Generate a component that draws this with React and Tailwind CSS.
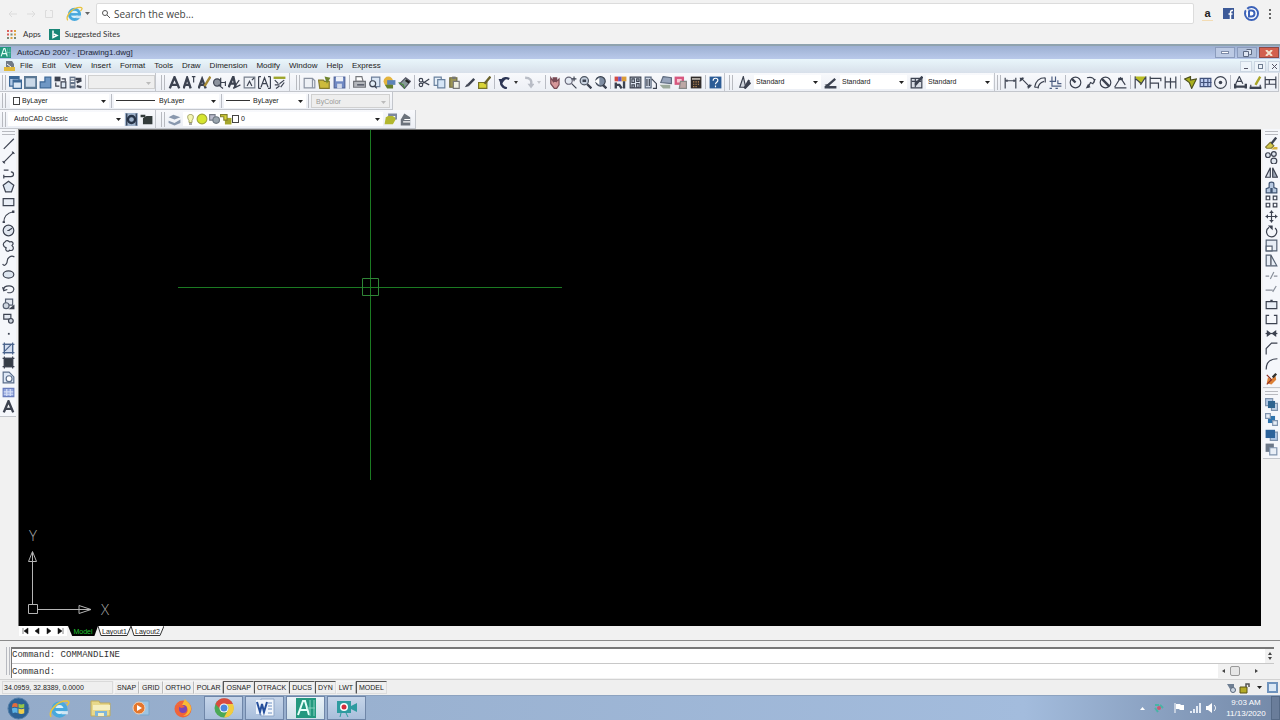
import React from 'react';

const K = '#3c4250';
const B = '#3b6796';
const L = '#b4cbe8';
const Y = '#d9d437';

const Lines = ({ d, c = K, w = 1 }) => <path d={d} stroke={c} strokeWidth={w} fill="none" />;

// 12x12 toolbar drawings
const icons = {
  // viewports
  vpDialog: <><path d="M1 1h8v8H1z" fill={L} stroke={B} /><path d="M4 4h7v7H4z" fill="#dbe7f5" stroke={B} /><path d="M4 5h7M1 2h8" stroke={B} strokeWidth="2" /></>,
  vpSingle: <><path d="M1 1.500h10v9H1z" fill="#c9d8e8" stroke="#5b7894" strokeWidth="2" /></>,
  vpPoly: <path d="M1.500 10.500v-5h4v-4h5v9z" fill="#6f97c4" stroke={B} />,
  vpObject: <><path d="M1 1h5v4H1z" fill={K} /><path d="M6.500 5.500h4v5h-4z" fill="#dce6f2" stroke={K} /><Lines d="M2 6v3h3M7 3h3v2" /></>,
  vpClip: <><path d="M1 1h5v10H1z" fill="#66758a" /><path d="M2 3h3M2 5h3M2 8h3" stroke="#fff" /><Lines d="M6 3h5M7 6l4-2M7 9l4 1" w={2} /></>,
  // text
  textA: <Lines d="M2 11L6 1.500 10 11M3.500 8h5" w={2} />,
  textI: <><Lines d="M1 11L4 2l3 9M2 8h4" w={2} /><Lines d="M8 1h3M9.500 1v5" /></>,
  textEdit: <><Lines d="M1 11L4 3l3 8M2 8h4" w={2} /><Lines d="M11 1L6 9" c="#a68a36" w={2} /></>,
  textFind: <><circle cx="4" cy="6" r="3" fill="#8d939e" stroke={K} /><Lines d="M7 2v7M11 5v4M7 6h4M5 8l4 3" /></>,
  textStyle: <><Lines d="M1 10L5 1l2 9M2 7h4" w={2} /><Lines d="M10 4L5 11l6-3" /></>,
  textScale: <><path d="M1.500 1.500h9v9h-9z" fill="#eef1f6" stroke="#777f8c" /><Lines d="M4 9l2-4 2 4M8 4l2-2" /></>,
  textJust: <><Lines d="M1 1v10M11 1v10M1 1h2M9 1h2M1 11h2M9 11h2M3 10l3-8 3 8M4 7h4" /></>,
  textSpace: <><path d="M1 1h10v2H1z" fill="#9da52b" /><Lines d="M2 4l3 3M10 4L6 7M2 8h4M7 10l3-4M3 11l3-2" /></>,
  // standard
  newDoc: <><path d="M1.500 2.500h7l2 2v6h-9z" fill="#edf0f5" stroke="#8b93a2" /><path d="M8.500 2.500v8" stroke="#8b93a2" /></>,
  open: <><path d="M1 4h4l1 1h4v6H2z" fill="#cdbb3c" stroke="#857a2d" /><path d="M6 1l5 1-3 5" fill="#70852f" /></>,
  save: <><path d="M1.500 1.500h9v9h-9z" fill="#7089c4" stroke="#53669b" /><path d="M3 1h6v4H3z" fill="#eef1f8" /><path d="M4 7h4v4H4z" fill="#d3daea" /></>,
  print: <><path d="M3 1h5l1 4H3z" fill="#fff" stroke="#75777c" /><path d="M1 5h10v5H1z" fill="#b3b6bc" stroke="#73767c" /><path d="M4 8h6" stroke={K} /></>,
  preview: <><path d="M3.500 1.500h7v8h-7z" fill="#dbe7f5" stroke="#6d7f9a" /><circle cx="4.500" cy="7" r="2.500" fill="#e4eef8" stroke={K} /><Lines d="M6 9l2 2" /></>,
  publish: <><circle cx="5" cy="5" r="4" fill="#e3b43e" /><path d="M4 4h7v4H4z" fill="#5d84b8" /><path d="M2 8h7v3H4z" fill="#66802a" /></>,
  dwf: <><path d="M2 7l5-5 4 3-5 6z" fill="#899" stroke="#556" /><path d="M1 6l4 2 1 3" stroke="#488a3b" fill="none" /><path d="M7 4l3 2" stroke="#222" strokeWidth="2" /></>,
  cut: <><Lines d="M10 3L4 7M10 8L4 5" w={1} /><circle cx="3" cy="4" r="1.500" stroke={K} fill="none" /><circle cx="3" cy="8" r="1.500" stroke={K} fill="none" /></>,
  copy: <><path d="M1.500 1.500h6v7h-6z" fill="#e6eff9" stroke="#68809d" /><path d="M4.500 3.500h6v7h-6z" fill="#d5e5f7" stroke="#68809d" /></>,
  paste: <><path d="M2 2h6v8H2z" fill="#9c9553" stroke="#6d693e" /><path d="M5 5h5v6H5z" fill="#f0f0e2" stroke="#777" /><path d="M4 1h3v2H4z" fill="#777" /></>,
  brush: <><Lines d="M10 3L5 8" w={2} /><path d="M2 10l2-3 2 2z" fill={K} /></>,
  blockEdit: <><path d="M1 6h7v5H1z" fill={Y} stroke="#787426" /><Lines d="M11 1L6 7" c="#6a622a" w={2} /></>,
  undo: <><path d="M8 11C4 10 2 7 4 4c1-2 4-2 6-1" fill="none" stroke="#2c3554" strokeWidth="2" /><path d="M1 3h6L3 8z" fill="#2c3554" /></>,
  redo: <><path d="M4 2c4 0 6 2 5 6" fill="none" stroke="#b9bdc6" strokeWidth="2" /><path d="M6 7h6l-3 4z" fill="#b9bdc6" /></>,
  pan: <><path d="M2 2l2 3V2h1v3h1V2h1v3l2-2v5l-2 3H5L2 7z" fill="#d6979a" stroke="#784a55" /></>,
  zoomRt: <><circle cx="4.500" cy="4.500" r="3" fill="#e4eaf3" stroke="#667" /><Lines d="M7 7l4 4M9 1v4M7 3h4" /></>,
  zoomWin: <><circle cx="5" cy="4.500" r="3.500" fill="#c5cfdd" stroke="#4d5562" /><Lines d="M7.500 7.500l3.500 3.500M3.500 4.500h3" w={2} /></>,
  zoomPrev: <><circle cx="6" cy="5" r="4" fill="#7e8ca1" stroke="#3b4350" /><path d="M1 5l4-3v6z" fill="#fff" /><Lines d="M8 8l3 3" w={2} /></>,
  props: <><path d="M1 1h3v4H1z" fill="#d44b42" /><path d="M4 1h3v4H4z" fill="#6a53bd" /><path d="M7 1h4v4H7z" fill="#db9c38" /><Lines d="M2 6v5M2 8h3l2 3M9 5v6" w={2} /></>,
  design: <><path d="M1.500 1.500h9v9h-9z" fill="#dce4ef" stroke={K} /><Lines d="M3 3h2v3H3zM7 3h2v2H7zM3 8h2v2H3zM7 7h2v3H7z" /></>,
  toolPal: <><path d="M1.500 1.500h5v9h-5z" fill="#d0d8e5" stroke="#59677d" /><Lines d="M3 3v6M5 3v6M7 3l4 4v4H8" /></>,
  sheetSet: <><path d="M4 1l7 1v5L2 6z" fill="#97a4bb" stroke="#5f6c80" /><path d="M1 8h9v3H4z" fill="#9caa9c" /></>,
  markup: <><path d="M1 1h8v7H1z" fill="#d7577f" /><path d="M3 3h4v3H3z" fill="#f8c6d4" /><path d="M6 5h5v6H5z" fill="#bda8a6" stroke="#888" /></>,
  calc: <><path d="M2 1h9v10H2z" fill="#302b2a" /><path d="M3 3h7" stroke="#f7efe4" /><path d="M4 5.500h1M6 5.500h1M8 5.500h1M4 7.500h1M6 7.500h1M8 7.500h1M4 9.500h1M6 9.500h1" stroke="#c9955d" /></>,
  help: <><path d="M1 1h10v10H1z" fill="#2c5c96" /><path d="M4 4.500c0-3 4-2.500 4-.5C8 6 6 5.500 6 7.500M6 8.500v1.500" stroke="#fff" fill="none" /></>,
  // styles
  styText: <><path d="M2 10L5 1l2 9z" fill="#cfd4dc" stroke={K} /><Lines d="M10 4L6 11l5-5" w={2} /></>,
  styDim: <><Lines d="M1 10h10M2 10l8-7" w={2} /><path d="M1 8l4-1v4z" fill={K} /></>,
  styTable: <><path d="M1.500 2.500h9v8h-9z" fill="#d9dde4" stroke={K} /><Lines d="M2 5h8M5 3v7" /><Lines d="M11 1L5 8" w={2} /></>,
  // dimensions
  dimLin: <Lines d="M1.500 2v9M10.500 2v9M2 4.500h8M3 3.500v2M9 3.500v2" />,
  dimAli: <><Lines d="M3 3l6 6M1 5l3-3M8 11l3-3" /><path d="M1 2h4L2 5zM7 10h3V7z" fill={K} /></>,
  dimArc: <><Lines d="M1 10C2 4 6 2 10 2M4 11c0-3 2-5 5-6M1 10h3M10 2v4" /></>,
  dimOrd: <><Lines d="M3 1v8h8M1 5h5V1M8 4v3h3M1 11h2M6 11h2" c="#4c5d80" /></>,
  dimRad: <><circle cx="6" cy="6" r="4.500" stroke={K} fill="none" /><Lines d="M6 6L3 3" w={2} /></>,
  dimJog: <><Lines d="M3 2c5-1 7 1 6 4M4 10l2-4 2 1 2-4" /><path d="M2 11l2-4 2 3z" fill={K} /></>,
  dimDia: <><circle cx="6" cy="6" r="4.500" stroke={K} fill="none" /><Lines d="M3 3l6 6" w={2} /></>,
  dimAng: <><Lines d="M1 10.500h10M1 10L6 2l4 6" /><path d="M4 2h4v2H4z" fill={K} /></>,
  dimQuick: <><path d="M1 1h10L6 8z" fill="#b9bd23" /><Lines d="M1.500 1v10M10.500 1v10M2 3l5 4M6 8l4-6" /></>,
  dimBase: <Lines d="M1.500 1v10M2 2.500h9M2 6.500h6M8.500 6v5M10.500 2v3" />,
  dimCont: <Lines d="M1.500 1v10M6 2v9M10.500 1v10M2 5.500h8" />,
  leader: <><path d="M1 3l5-2v3l5-1-4 8-2-5z" fill="#aab01f" stroke="#4d501f" /></>,
  tolerance: <><path d="M1.500 2.500h9v7h-9z" fill="#bcccf0" stroke="#40507a" /><Lines d="M4.500 3v6M8 3v6M2 6h9" c="#40507a" /></>,
  center: <><circle cx="6" cy="6" r="5" stroke={K} fill="none" /><circle cx="6" cy="6" r="1.500" fill={K} /></>,
  dimEdit: <><Lines d="M2 7l3-6 3 6M3 5h4" w={1} /><Lines d="M1 9.500h10M1.500 7v4M10.500 7v4" w={2} /></>,
  dimTEdit: <><Lines d="M1 10.500h10" w={2} /><Lines d="M10 1L6 8" c="#aaa527" w={2} /><Lines d="M2 8v3M10 8v3" /></>,
  dimUpd: <Lines d="M1.500 1v10M10.500 1v10M2 3.500h8M2 7.500h8M5 3v5" w={1} />,
  // workspace + layers
  gear: <><path d="M0 0h12v12H0z" fill="#9fb2ca" /><circle cx="6" cy="6" r="3" fill="none" stroke="#263347" strokeWidth="2" /><Lines d="M2 1v10M10 1v10" c="#263347" /></>,
  home: <><path d="M1 2h4v2H1zM6 3h5v7H3V5z" fill="#333b3b" /></>,
  layers: <><path d="M1 4l4-2 6 2-5 2zM1 7l5 2 5-3v3l-5 2-5-2z" fill="#8998ae" /></>,
  bulb: <><path d="M6 1c4 0 3 4 1.500 6v2h-3V7C3 5 2 1 6 1z" fill="#f4f6b4" stroke="#a0a060" /><path d="M4.500 10.500h3" stroke="#555" /></>,
  sun: <><circle cx="6" cy="6" r="4.500" fill="#d5e52e" stroke="#a0a638" /></>,
  freeze: <><path d="M2 2h5v5H2z" fill="#bbc" stroke="#767c88" /><circle cx="8" cy="7" r="3" fill="#9aa5ae" stroke="#6c7681" /></>,
  lock: <><path d="M5 5h6v6H5z" fill="#a5a62d" /><path d="M1 2h6v5H4V4H1z" fill={Y} stroke="#81802e" /></>,
  layPrev: <><path d="M2 4l4-2 5 3-3 5H1z" fill="#b2b72f" /><path d="M4 2h7v4" fill="none" stroke="#7c879c" strokeWidth="2" /></>,
  layState: <><path d="M5 1l5 3v7H2V6z" fill="#6c737d" /><path d="M5 6h5M4 8h6" stroke="#fff" /></>,
  // draw
  line: <Lines d="M2 10.500L10.500 2" />,
  xline: <><Lines d="M1.500 10.500L10.500 1.500" /><path d="M1 9l2 2M9 1l2 2" stroke={K} /></>,
  pline: <Lines d="M2 4h4M2 9.500h6c3 0 3-4 0-4M2 8v3" />,
  polygon: <path d="M6 1.500l4.500 3.500-2 5.500h-5L1.500 5z" fill="#dfe8f3" stroke={K} />,
  rect: <path d="M1.500 3.500h9v6h-9z" fill="#e9eef6" stroke={K} strokeWidth="1" />,
  arc: <><Lines d="M2 11c0-5 3-8 8-9" /><path d="M1 10h2v2H1zM9 1h2v2H9z" fill={K} /></>,
  circle: <><circle cx="6" cy="6" r="4.500" stroke={K} fill="#e0e6ef" /><path d="M6 6l3-2M5 6h2" stroke={K} /></>,
  cloud: <path d="M3 3c1-2 3-1 4 0 2-1 4 1 2 3 2 2 1 5-2 4-2 2-4 0-3-2-3-1-3-4-1-5z" fill="#edf1f7" stroke={K} />,
  spline: <Lines d="M1 9c2 3 4-1 4-3s3-5 6-3" />,
  ellipse: <ellipse cx="6" cy="6" rx="4.500" ry="3" fill="#dde5ef" stroke={K} />,
  elArc: <><path d="M2 6c0-4 9-4 8.500 0C10 9 7 9 5 8.500M1 4l1 3 3-1" fill="none" stroke={K} /></>,
  insBlock: <><path d="M3.500 1.500h6v5h-6z" fill="#e4e9f2" stroke="#555f70" /><circle cx="4" cy="7" r="2.500" fill="#cfd6e0" stroke="#555f70" /><path d="M6 10h5V6z" fill={K} /></>,
  mkBlock: <><path d="M2 2.500h6v4H2z" fill="#e4e9f2" stroke={K} /><circle cx="8" cy="8" r="2" fill="#cfd6e0" stroke={K} /></>,
  point: <path d="M5.500 5.500h1.500v1.500H5.500z" fill={K} />,
  hatch: <><path d="M2.500 2.500h7v7h-7z" fill="#d4def0" stroke="#4b648c" /><Lines d="M1 2.500h10M1 9.500h10M2.500 1v10M9.500 1v10M3 8l5-5" c="#4b648c" /></>,
  gradient: <><path d="M2 2h8v8H2z" fill="#353c46" /><Lines d="M1 2.500h10M1 9.500h10M2.500 1v10M9.500 1v10" /></>,
  region: <><path d="M1.500 1.500h5l4 4v5h-9z" fill="#dfe8f6" stroke="#5a6d8a" /><circle cx="6.500" cy="7" r="2.500" fill="#fff" stroke="#5a6d8a" /></>,
  table: <><path d="M1.500 2.500h9v7h-9z" fill="#90a4dd" stroke="#6a7dbd" /><Lines d="M2 5.500h8M2 7.500h8M4.500 3v6M7.500 3v6" c="#d5def6" /></>,
  // modify
  erase: <><path d="M1 9l4-4 3 3-2 2H2z" fill="#d4c84c" stroke="#807830" /><Lines d="M6 6l4-5" w={2} /><path d="M8 9h3v2H6z" fill="#d7b33f" /></>,
  copyObj: <><circle cx="3" cy="4" r="2" stroke={K} fill="#dfe6ef" /><circle cx="8" cy="3" r="2" stroke={K} fill="#dfe6ef" /><circle cx="8" cy="9" r="2.500" stroke={K} fill="#dfe6ef" /></>,
  mirror: <><path d="M5 2v8H1z" fill="#dbe1ea" stroke={K} /><path d="M7 2v8h4z" fill="#9ba5b4" stroke={K} /></>,
  offset: <path d="M1.500 10.500V7L4 6V3c0-2 4-2 4 0v3l2.500 1v3.500h-4V7h-1v3.500z" fill="#b6c8e0" stroke="#3f5472" />,
  array: <Lines d="M1.500 1.500h3v3h-3zM7.500 1.500h3v3h-3zM1.500 7.500h3v3h-3zM7.500 7.500h3v3h-3z" />,
  move: <><Lines d="M6 1v10M1 6h10" /><path d="M4 3l2-2 2 2zM4 9l2 2 2-2zM3 4L1 6l2 2zM9 4l2 2-2 2z" fill={K} /></>,
  rotate: <><path d="M4 2.500C0 5 2 10.500 6 10.500s6-5 3-7.500" fill="none" stroke={K} /><path d="M3 1h4v4z" fill={K} /></>,
  scale: <><path d="M1.500 1.500h9v9h-9z" fill="#e7edf5" stroke="#556173" /><path d="M1.500 6.500h5v4h-5z" fill="#fff" stroke="#556173" /></>,
  stretch: <><path d="M1.500 1.500h4l5 9h-9z" fill="#e7edf5" stroke="#556173" /><Lines d="M5.500 2v8" /></>,
  trim: <Lines d="M1 6.500h3M5 9l3-6M8 6.500h3" c="#8a909b" />,
  extend: <Lines d="M1 6.500h6M7 8l3-5" c="#8a909b" />,
  breakPt: <path d="M1.500 3.500h4v-1h1v1h4v6h-9z" fill="#e9eef6" stroke={K} />,
  breakObj: <Lines d="M4 2.500H1.500v7h9v-7H8" />,
  join: <><Lines d="M1 6h10" /><path d="M2 3l4 3-4 3zM10 3L6 6l4 3z" fill={K} /></>,
  chamfer: <Lines d="M1.500 11V6L6 1.500h5" />,
  fillet: <Lines d="M1.500 11C1.500 5 5 2 11 2" />,
  explode: <><path d="M2 10l1-5 3 2 3-5 1 5-4 4z" fill="#dd8136" /><path d="M2 3l4 4-4 4" stroke="#8d3025" fill="none" /><path d="M7 5l3-3" stroke="#333" strokeWidth="2" /></>,
  front: <><path d="M1 1h6v6H1z" fill={L} stroke="#7f93ad" /><path d="M6 5h5v6H6z" fill="#c9d8ea" stroke="#7f93ad" /><path d="M3 3h6v6H3z" fill="#2f648f" /></>,
  back: <><path d="M3 3h6v6H3z" fill="#2f74ad" /><path d="M1 1h4v4H1zM7 7h4v4H7z" fill="#e7eef7" stroke="#7f93ad" /></>,
  above: <><path d="M5 4h6v7H5z" fill={L} stroke="#7f93ad" /><path d="M1 2h8v7H1z" fill="#2d639a" /></>,
  under: <><path d="M1 1h7v7H1z" fill="#6c7888" /><path d="M4.500 4.500h6v6h-6z" fill="#e9eff7" stroke="#7f93ad" /></>,
};

const Icon = ({ name, className = 'w-[13px] h-[13px]' }) => (
  <svg viewBox="0.5 0.5 11 11" className={`block shrink-0 ${className}`} fill="none" aria-hidden="true">
    {icons[name]}
  </svg>
);

const Tool = ({ name }) => (
  <button aria-label={name} className="w-[15px] h-[15px] shrink-0 flex items-center justify-center">
    <Icon name={name} />
  </button>
);

const Sep = () => <div className="w-[5px] h-[14px] shrink-0 flex justify-center"><div className="w-px bg-[#b9bcc4]" /></div>;

const Tools = ({ names }) => names.split(' ').map((n, i) => (n === '|' ? <Sep key={i} /> : <Tool key={n} name={n} />));

const Grip = () => <div className="w-1 h-[15px] shrink-0 border-x border-[#b8bac0] mx-[2px]" />;

const DropMark = ({ className }) => (
  <svg viewBox="0 0 4 3" className={`w-1 h-[3px] mx-[2px] shrink-0 ${className}`}><path d="M0 0h4L2 3z" fill="currentColor" /></svg>
);

const Bar = ({ children, className = '' }) => (
  <div className={`h-full shrink-0 flex items-center bg-gradient-to-b from-[#f8f9fc] to-[#eceff5] border-r border-b border-[#c3c6cc] ${className}`}>
    {children}
  </div>
);

const Combo = ({ label, value, className, lead, disabled }) => (
  <div className={`relative h-[14px] shrink-0 flex items-center gap-[2px] ${disabled ? 'bg-[#eeeeee] border border-[#d0d0d0]' : 'bg-white'} ${className}`}>
    {lead}
    <select
      aria-label={label}
      disabled={disabled}
      defaultValue={value}
      className="flex-1 min-w-0 h-full appearance-none bg-transparent text-[7px] leading-[14px] text-[#222] disabled:text-[#999] outline-none"
    >
      <option>{value}</option>
    </select>
    <svg viewBox="0 0 5 3" className="absolute right-[3px] top-[6px] w-[5px] h-[3px] pointer-events-none">
      <path d="M0 0h5L2.500 3z" fill={disabled ? '#bbb' : '#222'} />
    </svg>
  </div>
);

const Swatch = () => <span className="w-[7px] h-[8px] shrink-0 border border-[#444] bg-white" />;

const IeLogo = ({ className }) => (
  <svg viewBox="0 0 20 20" className={className} aria-hidden="true">
    <circle cx="10" cy="11" r="6" fill="#d9f1fb" stroke="#48a9dd" strokeWidth="3.500" />
    <path d="M5 11h11" stroke="#48a9dd" strokeWidth="3" />
    <path d="M12 14h6" stroke="#cfe6f3" strokeWidth="3" />
    <path d="M2 18C-1 13 8 2 18 3c2 1 0 3-1 4" fill="none" stroke="#e8c33c" strokeWidth="1.500" />
  </svg>
);

const BrowserBar = () => (
  <div className="bg-[#f2f2f2] shrink-0">
    <div className="h-[27px] flex items-center pl-1">
      <div className="flex">
        <button aria-label="Back" className="w-[18px] flex justify-center">
          <svg viewBox="0 0 10 10" className="w-[10px] h-[10px]"><path d="M9 5H1M4 2L1 5l3 3" fill="none" stroke="#dcdcdc" /></svg>
        </button>
        <button aria-label="Forward" className="w-[18px] flex justify-center">
          <svg viewBox="0 0 10 10" className="w-[10px] h-[10px]"><path d="M1 5h8M6 2l3 3-3 3" fill="none" stroke="#dcdcdc" /></svg>
        </button>
        <button aria-label="Reload" className="w-[18px] flex justify-center">
          <svg viewBox="0 0 10 10" className="w-[10px] h-[10px]"><path d="M3 1.500H1.500v7h7v-7H6" fill="none" stroke="#dcdcdc" /></svg>
        </button>
      </div>
      <button aria-label="Search engine" className="ml-2 w-[27px] flex items-center gap-[2px] shrink-0">
        <IeLogo className="w-[17px] h-[17px]" />
        <svg viewBox="0 0 5 3" className="w-[5px] h-[3px]"><path d="M0 0h5L2.500 3z" fill="#666" /></svg>
      </button>
      <label className="ml-[3px] flex-1 h-[21px] bg-white border border-[#dcdcdc] rounded-xs flex items-center px-[5px] gap-1">
        <svg viewBox="0 0 8 8" className="w-2 h-2 shrink-0"><circle cx="3" cy="3" r="2.500" fill="none" stroke="#555" /><path d="M5 5l3 3" stroke="#555" /></svg>
        <input
          aria-label="Search"
          placeholder="Search the web..."
          className="flex-1 text-[10px] leading-[16px] font-['Open_Sans',sans-serif] placeholder:text-[#444] outline-none"
        />
      </label>
      <div className="flex items-center pl-2 pr-[6px]">
        <a href="#amazon" className="w-[11px] text-[11px] leading-[14px] font-bold text-[#222] border-b border-[#f3dcb4] text-center">a</a>
        <a href="#facebook" aria-label="Facebook" className="ml-[10px]">
          <svg viewBox="0 0 11 11" className="w-[11px] h-[11px]"><path d="M0 0h11v11H0z" fill="#3d5a98" /><path d="M10 2.500H9C7.500 2.500 7.500 3.500 7.500 5v6M5.500 6h4" fill="none" stroke="#fff" strokeWidth="1.500" /></svg>
        </a>
        <a href="#d" aria-label="Assistant" className="ml-[10px]">
          <svg viewBox="0 0 15 15" className="w-[15px] h-[15px]"><circle cx="7.500" cy="7.500" r="6.500" fill="#fff" stroke="#3c62b8" strokeWidth="2" /><path d="M5 4.500h2.500a3 3 0 010 6H5z" fill="none" stroke="#3c62b8" strokeWidth="2" /><path d="M1 2l3 3" stroke="#f2f2f2" strokeWidth="2" /></svg>
        </a>
        <button aria-label="Menu" className="ml-[6px] w-[9px] flex flex-col items-center gap-[2px]">
          <span className="size-[2px] bg-[#666]" /><span className="size-[2px] bg-[#666]" /><span className="size-[2px] bg-[#666]" />
        </button>
      </div>
    </div>
    <div className="h-[17px] pb-[3px] flex items-center pl-[7px] text-[8px] leading-[12px] text-[#333] font-['Lato',sans-serif]">
      <a href="#apps" className="flex items-center gap-[7px]">
        <svg viewBox="0 0 9 9" className="w-[9px] h-[9px]">
          <path d="M0 0h2v2H0zM3.500 0h2v2h-2zM0 3.500h2v2H0z" fill="#d9605a" />
          <path d="M7 0h2v2H7zM7 3.500h2v2H7zM3.500 7h2v2h-2z" fill="#dda23f" />
          <path d="M3.500 3.500h2v2h-2zM0 7h2v2H0zM7 7h2v2H7z" fill="#7a8a75" />
        </svg>
        Apps
      </a>
      <a href="#suggested" className="ml-2 flex items-center gap-[5px]">
        <svg viewBox="0 0 11 11" className="w-[11px] h-[11px]"><path d="M0 0h11v11H0z" fill="#198576" /><path d="M4 1.500v7l4-2-3-1.500" fill="none" stroke="#fff" strokeWidth="1.500" /></svg>
        Suggested Sites
      </a>
    </div>
  </div>
);

const AcadLogo = ({ className }) => (
  <svg viewBox="0 0 20 20" className={className} aria-hidden="true">
    <path d="M0 0h20v20H0z" fill="#23987e" />
    <path d="M2 17L7 3h2l4 14M4 12h7" fill="none" stroke="#e5fff8" strokeWidth="2" />
    <path d="M14 2v16M18 2v16M11 10h8" stroke="#85d2bf" />
  </svg>
);

const TitleBar = () => (
  <div className="h-[15px] shrink-0 flex items-center border-t-2 border-[#8fa3ae] bg-gradient-to-b from-[#9db0d2] to-[#b9c9ea]">
    <AcadLogo className="w-[11px] h-[11px] shrink-0" />
    <h1 className="ml-[6px] text-[8px] leading-[12px] text-[#1d2638] flex-1">AutoCAD 2007 - [Drawing1.dwg]</h1>
    <div className="flex gap-[2px] pr-px">
      <button aria-label="Minimize" className="w-5 h-[11px] border border-[#8b9cbd] bg-[#bccae4] flex items-center justify-center"><span className="w-2 h-[3px] bg-white border border-[#7d8ba8]" /></button>
      <button aria-label="Restore" className="w-5 h-[11px] border border-[#8b9cbd] bg-[#b0bfda] flex items-center justify-center">
        <svg viewBox="0 0 9 8" className="w-[9px] h-2"><path d="M3.500.5h5v5h-2M.5 2.500h5v5h-5z" fill="#dfe6f2" stroke="#5c6880" /></svg>
      </button>
      <button aria-label="Close" className="w-5 h-[11px] border border-[#8d4a45] bg-[#d2604f] flex items-center justify-center">
        <svg viewBox="0 0 8 6" className="w-2 h-[6px]"><path d="M1 0l6 6M7 0L1 6" stroke="#f3e3cf" strokeWidth="2" /></svg>
      </button>
    </div>
  </div>
);

const menus = ['File', 'Edit', 'View', 'Insert', 'Format', 'Tools', 'Draw', 'Dimension', 'Modify', 'Window', 'Help', 'Express'];

const MenuBar = () => (
  <div className="h-[14px] shrink-0 flex items-center bg-gradient-to-b from-[#e9f6fb] to-[#d8e0ea]">
    <svg viewBox="0 0 11 11" className="w-[11px] h-[11px] ml-1 shrink-0"><path d="M2 0h6l2 3v6H2z" fill="#707a86" /><path d="M0 6h11v4H0z" fill="#e0b93b" /><path d="M3 3l4 3" stroke="#fff" /></svg>
    <nav className="flex-1 flex pl-px text-[8px] leading-[12px] text-[#222]">
      {menus.map((m) => <button key={m} className="pl-1 pr-[5px]">{m}</button>)}
    </nav>
    <div className="flex gap-[2px]">
      <button aria-label="Minimize drawing" className="w-3 h-[11px] bg-[#eef4fa] border border-[#cbd6e2] flex items-end justify-center pb-[2px]"><span className="w-1 h-px bg-[#556]" /></button>
      <button aria-label="Restore drawing" className="w-3 h-[11px] bg-[#eef4fa] border border-[#cbd6e2] flex items-center justify-center"><span className="w-[5px] h-[5px] border border-[#6d7c90]" /></button>
      <button aria-label="Close drawing" className="w-3 h-[11px] bg-[#eef4fa] border border-[#cbd6e2] flex items-center justify-center">
        <svg viewBox="0 0 5 5" className="w-[5px] h-[5px]"><path d="M0 0l5 5M5 0L0 5" stroke="#556" /></svg>
      </button>
    </div>
  </div>
);

const Toolbars = () => (
  <div className="shrink-0 bg-[#f1f1f1] overflow-hidden">
    <div className="h-[19px] flex">
      <Bar>
        <Grip />
        <Tools names="vpDialog vpSingle vpPoly vpObject vpClip" />
        <Sep />
        <Combo label="Viewport scale" value="" disabled className="w-[67px]" />
      </Bar>
      <Bar className="pl-[3px] pr-[2px]">
        <Grip />
        <Tools names="textA textI textEdit textFind textStyle textScale textJust textSpace" />
      </Bar>
      <Bar className="pl-[4px] pr-px">
        <Grip />
        <Tools names="newDoc open save | print preview publish dwf | cut copy paste brush blockEdit |" />
        <Tool name="undo" />
        <DropMark className="text-[#333]" />
        <Tool name="redo" />
        <DropMark className="text-[#c4c7ce]" />
        <Tools names="| pan zoomRt zoomWin zoomPrev | props design toolPal sheetSet markup calc | help" />
      </Bar>
      <Bar className="pl-[2px] pr-px gap-[2px]">
        <Grip />
        <Tool name="styText" />
        <Combo label="Text style" value="Standard" className="w-[67px] pl-[2px]" />
        <Tool name="styDim" />
        <Combo label="Dimension style" value="Standard" className="w-[67px] pl-[2px]" />
        <Tool name="styTable" />
        <Combo label="Table style" value="Standard" className="w-[67px] pl-[2px]" />
      </Bar>
      <Bar>
        <Grip />
        <Tools names="dimLin dimAli dimArc dimOrd | dimRad dimJog dimDia dimAng | dimQuick dimBase dimCont | leader tolerance center | dimEdit dimTEdit dimUpd" />
      </Bar>
    </div>
    <div className="h-[18px] flex">
      <Bar className="pr-[2px]">
        <Grip />
        <Combo label="Color" value="ByLayer" className="w-[99px] ml-[2px] pl-[3px]" lead={<Swatch />} />
        <Sep />
        <Combo label="Linetype" value="ByLayer" className="w-[105px] pl-[2px]" lead={<span className="w-[39px] h-px bg-[#333] mr-[2px]" />} />
        <Sep />
        <Combo label="Lineweight" value="ByLayer" className="w-[82px] pl-[2px]" lead={<span className="w-[24px] h-px bg-[#333] mr-px" />} />
        <Sep />
        <Combo label="Plot style" value="ByColor" disabled className="w-[79px] pl-1" />
      </Bar>
    </div>
    <div className="h-[19px] flex">
      <Bar className="pr-px">
        <Grip />
        <Combo label="Workspace" value="AutoCAD Classic" className="w-[116px] pl-[6px]" />
        <Tools names="gear home" />
      </Bar>
      <Bar className="pl-[3px] pr-[2px]">
        <Grip />
        <Tool name="layers" />
        <Combo
          label="Layer"
          value="0"
          className="w-[200px] ml-px pl-[2px]"
          lead={(
            <div className="flex items-center">
              <Icon name="bulb" className="w-[11px] h-[11px]" />
              <Icon name="sun" className="w-3 h-3" />
              <Icon name="freeze" className="w-3 h-3" />
              <Icon name="lock" className="w-3 h-3" />
              <Swatch />
            </div>
          )}
        />
        <Tools names="layPrev layState" />
      </Bar>
    </div>
  </div>
);

const VBar = ({ names, className }) => (
  <div className={`pb-[2px] flex flex-col items-center justify-between bg-[#f5f7fb] border-b border-[#c3c6cc] relative ${className}`}>
    <div className="absolute top-[2px] w-[13px] h-1 border-y border-[#b8bac0]" />
    {names.split(' ').map((n) => (
      <button key={n} aria-label={n} className="w-[15px] h-[14px] shrink-0 flex items-center justify-center">
        <Icon name={n} />
      </button>
    ))}
  </div>
);

const Canvas = () => (
  <div className="relative flex-1 bg-black border-t border-l border-[#777] overflow-hidden">
    <svg viewBox="0 0 384 350" className="absolute left-[159px] top-0 w-[384px] h-[350px]" fill="none" stroke="#1b7a22">
      <path d="M0 157.500h384" />
      <path d="M192.500 0v350" />
      <path d="M184.500 148.500h16v17h-16z" stroke="#2f8536" />
    </svg>
    <svg viewBox="0 -8 90 98" className="absolute left-[7px] bottom-[8px] w-[90px] h-[98px]" fill="none" stroke="#b5b5b5">
      <path d="M2.500 76.500h9v9h-9zM6.500 76V34M12 81.500h41M6.500 23.500l-4 10h8zM6.500 24v9M65 81.500l-12-4v8zM53 81.500h11" />
      <text x="3" y="13" fill="#a8a8a8" stroke="none" className="text-[15px] font-light font-['Open_Sans',sans-serif]">Y</text>
      <text x="75" y="87" fill="#a8a8a8" stroke="none" className="text-[15px] font-light font-['Open_Sans',sans-serif]">X</text>
    </svg>
  </div>
);

const navPaths = ['M2 1v6M7 1L3 4l4 3z', 'M6 1L2 4l4 3z', 'M2 1l4 3-4 3z', 'M6 1v6M1 1l4 3-4 3z'];

const LayoutTabs = () => (
  <div className="h-[14px] shrink-0 flex items-start pl-px text-[7px] leading-[9px]">
    {navPaths.map((d, i) => (
      <button key={d} aria-label={['First tab', 'Previous tab', 'Next tab', 'Last tab'][i]} className="w-3 h-[10px] bg-white flex items-center justify-center">
        <svg viewBox="0 0 8 8" className="w-2 h-2"><path d={d} fill="#111" stroke="#111" strokeWidth="0.500" /></svg>
      </button>
    ))}
    <button className="w-[30px] h-[10px] ml-px bg-black text-[#21c332] [clip-path:polygon(0_0,100%_0,88%_100%,14%_100%)]">Model</button>
    {['Layout1', 'Layout2'].map((t) => (
      <button key={t} className="relative w-[33px] h-[10px] text-[#222]">
        <svg viewBox="0 0 33 10" className="absolute inset-0 w-full h-full"><path d="M0 0l3 9.500h26L33 0" fill="#fff" stroke="#333" /></svg>
        <span className="relative">{t}</span>
      </button>
    ))}
  </div>
);

const Workspace = () => (
  <div className="flex-1 min-h-0 flex bg-[#f1f1f1] border-b border-[#8a8a8a]">
    <aside className="w-[18px] shrink-0">
      <VBar className="w-4 h-[288px] pt-[7px]" names="line xline pline polygon rect arc circle cloud spline ellipse elArc insBlock mkBlock point hatch gradient region table textA" />
    </aside>
    <main className="flex-1 min-w-0 flex flex-col">
      <Canvas />
      <LayoutTabs />
    </main>
    <aside className="w-[19px] shrink-0 pl-[2px]">
      <VBar className="h-[259px] pt-[7px]" names="erase copyObj mirror offset array move rotate scale stretch trim extend breakPt breakObj join chamfer fillet explode" />
      <VBar className="mt-px h-[70px] pt-[8px]" names="front back above under" />
    </aside>
  </div>
);

const CommandLine = () => (
  <div className="shrink-0 h-[38px] bg-[#f1f1f1] pt-[6px] pl-[6px] pr-[6px] flex">
    <div className="w-1 h-[28px] border-x border-[#b8bac0] shrink-0" />
    <div className="ml-px flex-1 h-[31px] border-t-2 border-l border-[#777] bg-white font-['Liberation_Mono',monospace] text-[9px] leading-[12px] text-[#333]">
      <div className="h-[15px] flex border-b border-[#c8c8c8]">
        <p className="flex-1">Command: COMMANDLINE</p>
        <div className="w-[9px] bg-[#f1f1f1] flex flex-col justify-between items-center py-[3px]">
          <button aria-label="Scroll up"><svg viewBox="0 0 4 3" className="w-1 h-[3px] block"><path d="M0 3h4L2 0z" fill="#444" /></svg></button>
          <button aria-label="Scroll down"><svg viewBox="0 0 4 3" className="w-1 h-[3px] block"><path d="M0 0h4L2 3z" fill="#444" /></svg></button>
        </div>
      </div>
      <div className="h-[14px] flex items-stretch">
        <label htmlFor="cmd" className="pt-[2px]">Command:</label>
        <input id="cmd" className="flex-1 outline-none pl-1" />
        <div className="w-[56px] bg-[#f1f1f1] flex items-center pl-1">
          <button aria-label="Scroll left"><svg viewBox="0 0 3 4" className="w-[3px] h-1 block"><path d="M3 0v4L0 2z" fill="#444" /></svg></button>
          <span className="ml-[5px] w-[10px] h-[10px] border border-[#999] rounded-xs bg-[#e6e6e6]" />
          <button aria-label="Scroll right" className="ml-[15px]"><svg viewBox="0 0 3 4" className="w-[3px] h-1 block"><path d="M0 0v4l3-2z" fill="#444" /></svg></button>
        </div>
      </div>
    </div>
  </div>
);

const modes = [
  ['SNAP', false], ['GRID', false], ['ORTHO', false], ['POLAR', false], ['OSNAP', true],
  ['OTRACK', true], ['DUCS', true], ['DYN', true], ['LWT', false], ['MODEL', true],
];

const StatusBar = () => (
  <div className="h-4 shrink-0 flex items-center bg-[#efefef] border-t border-[#d2d2d2] text-[7px] leading-[12px] text-[#222]">
    <div className="w-[111px] h-[13px] ml-[2px] pl-px border border-[#dadada] shrink-0">34.0959, 32.8389, 0.0000</div>
    <div className="flex flex-1 pl-px">
      {modes.map(([m, on]) => (
        <button
          key={m}
          aria-pressed={on}
          className={on ? 'px-[2px] h-[13px] border border-t-[#555] border-l-[#555] border-r-[#ddd] border-b-[#ddd]' : 'px-[2px] h-[13px] border border-t-[#f5f5f5] border-l-[#f5f5f5] border-r-[#bbb] border-b-[#ddd]'}
        >
          {m}
        </button>
      ))}
    </div>
    <div className="flex items-center gap-[2px] pr-[2px]">
      <svg viewBox="0 0 12 12" className="w-3 h-3"><path d="M2 2h7v3L5 7z" fill="#6f7f93" /><circle cx="8" cy="8" r="2.500" fill="#ccd6e2" stroke="#56657a" /></svg>
      <svg viewBox="0 0 12 12" className="w-3 h-3"><path d="M1 5h7v6H1z" fill="#b4ab27" stroke="#5a5519" /><path d="M7 5V2h3v3" fill="none" stroke="#555" strokeWidth="1.500" /></svg>
      <button aria-label="Status menu" className="w-3 flex justify-center"><svg viewBox="0 0 5 3" className="w-[5px] h-[3px]"><path d="M0 0h5L2.500 3z" fill="#222" /></svg></button>
      <button aria-label="Clean screen" className="w-[11px] h-[11px] bg-[#dbe8f5] border-2 border-[#6f93bd]" />
    </div>
  </div>
);

const taskBtn = 'w-[39px] h-full flex items-center justify-center border border-[#6f86a8] bg-gradient-to-b';

const Taskbar = () => (
  <footer className="h-[25px] shrink-0 flex items-center border-t border-[#8da3c0] bg-gradient-to-r from-[#94abc9] via-[#a3bcdd] via-80% to-[#7489a8]">
    <button aria-label="Start" className="w-[36px] flex justify-center">
      <svg viewBox="0 0 24 24" className="w-[23px] h-[23px]">
        <circle cx="12" cy="12" r="11" fill="#2d6295" stroke="#557fa8" />
        <path d="M6 7c2-1 3-1 5 0v4c-2-1-4-1-6 0z" fill="#e26c3c" />
        <path d="M12 7c2 1 4 1 6 0v4c-2 1-4 1-6 0z" fill="#95c648" />
        <path d="M5 12c2-1 4-1 6 0v5c-2-1-3-1-5 0z" fill="#5cb2e4" />
        <path d="M12 12c2 1 4 1 6 0v5c-2 1-4 1-6 0z" fill="#f0cf4a" />
      </svg>
    </button>
    <button aria-label="Internet Explorer" className="w-[46px] flex justify-center"><IeLogo className="w-[21px] h-[21px]" /></button>
    <button aria-label="Explorer" className="w-[38px] flex justify-center">
      <svg viewBox="0 0 22 20" className="w-[22px] h-5"><path d="M1 3h8l1 2h10v13H1z" fill="#e8d88b" stroke="#c0ab5a" /><path d="M3 7h17v5H3z" fill="#f6efc0" /><path d="M5 13h12v5H5z" fill="#7fb6da" /><path d="M8 15h6v3H8z" fill="#f6efc0" /></svg>
    </button>
    <button aria-label="Media Player" className="w-[42px] flex justify-center">
      <svg viewBox="0 0 18 18" className="w-[18px] h-[18px]"><path d="M8 2h9v14H8z" fill="#9dc5e2" stroke="#7aa7cb" /><circle cx="7" cy="9" r="6" fill="#e4762c" stroke="#f2d3b8" /><path d="M5 6l5 3-5 3z" fill="#fff" /></svg>
    </button>
    <button aria-label="Firefox" className="w-[42px] flex justify-center">
      <svg viewBox="0 0 20 20" className="w-5 h-5"><circle cx="10" cy="11" r="8.500" fill="#f0643a" /><path d="M3 6c2 1 4 0 6 1l3-6c2 3 7 5 6 11-1 3-3 6-8 6 5-2 6-7 3-10z" fill="#f9ba35" /><circle cx="10" cy="11" r="4" fill="#7a46b8" /><path d="M4 7l4-1 4 3-4 1z" fill="#f0643a" /></svg>
    </button>
    <div className="flex h-full gap-[2px] flex-1">
      <button aria-label="Chrome" className={`${taskBtn} from-[#c6d5e9] to-[#a8bedb]`}>
        <svg viewBox="0 0 20 20" className="w-5 h-5"><circle cx="10" cy="10" r="9.500" fill="#4ba857" /><path d="M1.500 6A9.500 9.500 0 0119 6h-9a4 4 0 00-4 5z" fill="#d94b3d" /><path d="M19 6a9.500 9.500 0 01-9 13.500l4-7.500a4 4 0 00-2-6z" fill="#f3cb3f" /><circle cx="10" cy="10" r="4.500" fill="#fff" /><circle cx="10" cy="10" r="3.500" fill="#4b86dc" /></svg>
      </button>
      <button aria-label="Word" className={`${taskBtn} from-[#c6d5e9] to-[#a8bedb]`}>
        <svg viewBox="0 0 20 20" className="w-5 h-5"><path d="M6 1h13v17H6z" fill="#f3f7fc" stroke="#8fa7c9" /><path d="M12 5h5M12 8h5M12 11h5M9 15h8" stroke="#6d90c4" /><path d="M1 2h12v14H1z" fill="#eef4fc" /><path d="M2 4l3 10 2-8 2 8 3-10" fill="none" stroke="#254f9c" strokeWidth="2" /></svg>
      </button>
      <button aria-label="AutoCAD" className={`${taskBtn} from-[#eaf2f8] to-[#cfe0ea]`}><AcadLogo className="w-5 h-5" /></button>
      <button aria-label="Recorder" className={`${taskBtn} from-[#c6d5e9] to-[#a8bedb]`}>
        <svg viewBox="0 0 22 18" className="w-[22px] h-[18px]"><path d="M1 2h14v12H1zM15 7l6-3v9l-6-3z" fill="#2e9ba0" /><circle cx="8" cy="8" r="4" fill="#fff" /><circle cx="8" cy="8" r="2.500" fill="#d42d3c" /><path d="M5 14l-1 4M10 14l2 4" stroke="#2e9ba0" /></svg>
      </button>
    </div>
    <div className="flex items-center h-full gap-1 text-white">
      <svg viewBox="0 0 5 3" className="w-[5px] h-[3px] mr-1"><path d="M0 3h5L2.500 0z" fill="#fff" /></svg>
      <svg viewBox="0 0 12 12" className="w-3 h-3 mr-1"><path d="M2 3h4M7 3l3 3M2 6l3 4" fill="none" stroke="#47b5a6" strokeWidth="2" /><circle cx="6" cy="6" r="2" fill="#c85a72" /></svg>
      <svg viewBox="0 0 12 12" className="w-3 h-3"><path d="M2 1v10" stroke="#fff" /><path d="M3 2h4l1 1h3v5H7L6 7H3z" fill="#fff" /></svg>
      <svg viewBox="0 0 12 12" className="w-3 h-3"><path d="M2 9v2M5 7v4M8 4v7M11 1v10" stroke="#e4ebf5" strokeWidth="2" /></svg>
      <svg viewBox="0 0 12 12" className="w-3 h-3"><path d="M1 4h2l4-3v10L3 8H1z" fill="#fff" /><path d="M9 3c2 2 2 4 0 6" fill="none" stroke="#fff" /></svg>
      <time className="w-[42px] ml-1 text-[8px] leading-[11px] text-center"><span className="block">9:03 AM</span><span className="block">11/13/2020</span></time>
      <button aria-label="Show desktop" className="w-[9px] h-full border border-[#566a86] bg-[#6a7d9a]" />
    </div>
  </footer>
);

const App = () => (
  <div className="h-screen flex flex-col overflow-hidden bg-[#f1f1f1] font-['Liberation_Sans',Arial,sans-serif]">
    <BrowserBar />
    <TitleBar />
    <MenuBar />
    <Toolbars />
    <Workspace />
    <CommandLine />
    <StatusBar />
    <Taskbar />
  </div>
);

export default App;
